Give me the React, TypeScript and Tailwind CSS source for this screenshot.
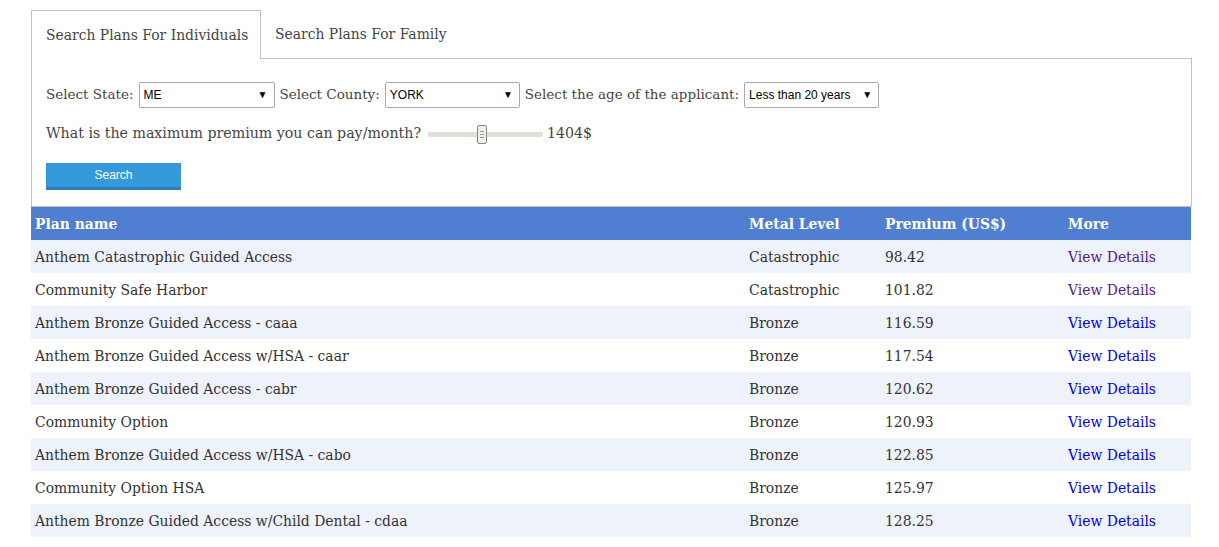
import React from "react";

const rows = [
  ["Anthem Catastrophic Guided Access", "Catastrophic", "98.42", true],
  ["Community Safe Harbor", "Catastrophic", "101.82", true],
  ["Anthem Bronze Guided Access - caaa", "Bronze", "116.59", false],
  ["Anthem Bronze Guided Access w/HSA - caar", "Bronze", "117.54", false],
  ["Anthem Bronze Guided Access - cabr", "Bronze", "120.62", false],
  ["Community Option", "Bronze", "120.93", false],
  ["Anthem Bronze Guided Access w/HSA - cabo", "Bronze", "122.85", false],
  ["Community Option HSA", "Bronze", "125.97", false],
  ["Anthem Bronze Guided Access w/Child Dental - cdaa", "Bronze", "128.25", false],
] as const;

function Select({ value, width }: { value: string; width: string }) {
  return (
    <div
      className={`${width} h-[26px] border border-[#a9a9a9] rounded-[2px] bg-white flex items-center justify-between pl-[4px] pr-[6px] text-[12px] text-black`}
      style={{ fontFamily: '"Liberation Sans", Arial, sans-serif' }}
    >
      <span>{value}</span>
      <span className="text-[10px] leading-none">▼</span>
    </div>
  );
}

export default function App() {
  return (
    <div
      className="w-[1219px] h-[547px] bg-white overflow-hidden text-[13.9px] text-[#333]"
      style={{ fontFamily: '"DejaVu Serif", Georgia, serif' }}
    >
      <div className="ml-[31px] mt-[10px] w-[1161px]">
        {/* tabs */}
        <div className="flex border-b border-[#c0c0c0] h-[49px]">
          <div className="w-[230px] h-[49px] border border-[#c0c0c0] border-b-0 bg-white -mb-px flex items-center pl-[14px] text-[#444] text-[13.9px]">
            Search Plans For Individuals
          </div>
          <div className="h-[48px] flex items-center pl-[14px] text-[#444] text-[13.9px]">
            Search Plans For Family
          </div>
        </div>
        {/* panel */}
        <div className="border border-t-0 border-[#c0c0c0] pl-[14px] pt-[23px] pb-[16px] text-[#444]">
          <div className="flex items-center h-[26px] text-[13.5px]">
            <span className="mr-[5px] -mt-px">Select State:</span>
            <Select value="ME" width="w-[136px]" />
            <span className="ml-[5px] mr-[5px] -mt-px">Select County:</span>
            <Select value="YORK" width="w-[135px]" />
            <span className="ml-[5px] mr-[5px] -mt-px">Select the age of the applicant:</span>
            <Select value="Less than 20 years" width="w-[135px]" />
          </div>
          <div className="flex items-center h-[20px] mt-[16px] text-[14.2px]">
            <span>What is the maximum premium you can pay/month?</span>
            <div className="relative ml-[7px] w-[115px] h-[5px] bg-[#e2dfd9] rounded-[2px]">
              <div className="absolute left-[49px] top-[-7px] w-[10px] h-[19px] bg-[#f1efeb] border border-[#8c8782] rounded-[2px] flex flex-col items-center justify-center gap-[2px]">
                <div className="w-[4px] h-px bg-[#9a958f]" />
                <div className="w-[4px] h-px bg-[#9a958f]" />
                <div className="w-[4px] h-px bg-[#9a958f]" />
              </div>
            </div>
            <span className="ml-[4px] text-[#444]">1404$</span>
          </div>
          <div className="mt-[19px]">
            <div
              className="w-[135px] h-[27px] bg-[#3498db] border-b-[3px] border-[#2a80c0] flex items-center justify-center text-white text-[12px]"
              style={{ fontFamily: '"Liberation Sans", Arial, sans-serif' }}
            >
              Search
            </div>
          </div>
        </div>
        {/* table */}
        <table className="w-[1160px] border-collapse table-fixed">
          <colgroup>
            <col className="w-[714px]" />
            <col className="w-[136px]" />
            <col className="w-[183px]" />
            <col className="w-[127px]" />
          </colgroup>
          <thead>
            <tr className="bg-[#507ed1] text-white h-[33px] text-left">
              <th className="px-[4px] pt-[2px] font-bold">Plan name</th>
              <th className="px-[4px] pt-[2px] font-bold">Metal Level</th>
              <th className="px-[4px] pt-[2px] font-bold">Premium (US$)</th>
              <th className="px-[4px] pt-[2px] font-bold">More</th>
            </tr>
          </thead>
          <tbody>
            {rows.map(([name, level, price, visited], i) => (
              <tr key={i} className={`h-[33px] ${i % 2 === 0 ? "bg-[#eef2fb]" : "bg-white"}`}>
                <td className="px-[4px] pt-[2px]">{name}</td>
                <td className="px-[4px] pt-[2px]">{level}</td>
                <td className="px-[4px] pt-[2px]">{price}</td>
                <td className="px-[4px] pt-[2px]">
                  <span className={visited ? "text-[#551a8b]" : "text-[#0000ee]"}>View Details</span>
                </td>
              </tr>
            ))}
          </tbody>
        </table>
      </div>
    </div>
  );
}
